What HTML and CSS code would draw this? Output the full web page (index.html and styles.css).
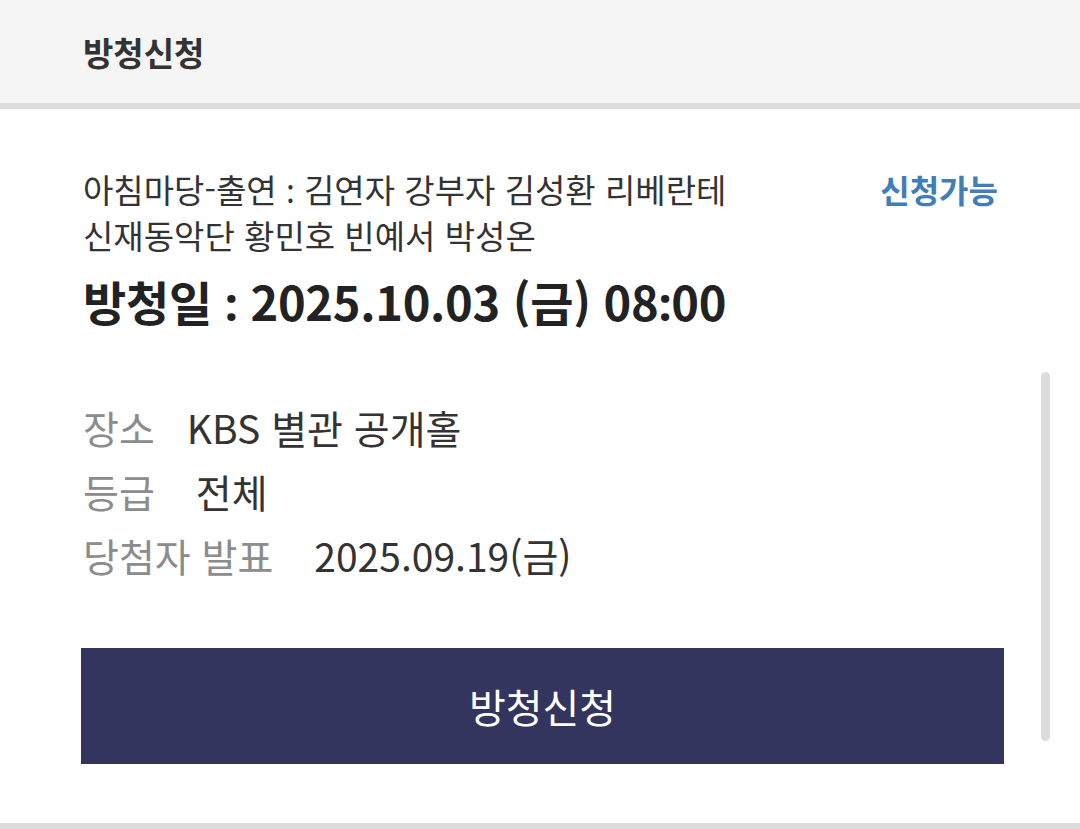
FILE: index.html
```html
<!DOCTYPE html>
<html lang="ko">
<head>
<meta charset="utf-8">
<link rel="stylesheet" href="styles.css">
</head>
<body>
<header class="topbar">
  <h1 class="title">방청신청</h1>
</header>
<main class="content">
  <section class="program">
    <div class="program-head">
      <p class="program-name">아침마당-출연 <span class="colon">:</span> 김연자 강부자 김성환 리베란테<br>신재동악단 황민호 빈예서 박성온</p>
      <span class="status">신청가능</span>
    </div>
    <p class="date">방청일 <span class="colon">:</span> 2025.10.03 (금) 08<span class="colon">:</span>00</p>
  </section>
  <dl class="info">
    <div class="row"><dt>장소</dt><dd class="v1">KBS 별관 공개홀</dd></div>
    <div class="row"><dt>등급</dt><dd class="v2">전체</dd></div>
    <div class="row"><dt>당첨자 발표</dt><dd class="v2">2025.09.19(금)</dd></div>
  </dl>
  <button class="apply">방청신청</button>
  <div class="scrollbar"></div>
</main>
<div class="bottom-line"></div>
</body>
</html>
```
FILE: styles.css
```css
html, body {
  margin: 0;
  padding: 0;
  background: #ffffff;
}
body {
  width: 1080px;
  height: 829px;
  overflow: hidden;
  font-family: "Noto Sans CJK KR", "Noto Sans", sans-serif;
  color: #333333;
  display: flex;
  flex-direction: column;
}
.topbar {
  height: 103px;
  background: #f5f5f5;
  border-bottom: 6px solid #dcdcdc;
  display: flex;
  align-items: center;
  padding-left: 83px;
  flex-shrink: 0;
}
.title {
  margin: 0;
  font-size: 33px;
  font-weight: 700;
  color: #333333;
}
.content {
  position: relative;
  flex: 1;
  padding: 58px 82px 0 83px;
}
.program-head {
  display: flex;
  justify-content: space-between;
  align-items: flex-start;
}
.program-name {
  margin: 0;
  font-size: 33px;
  line-height: 45px;
  color: #333333;
}
.colon {
  font-family: "Noto Sans", sans-serif;
}
.status {
  font-size: 32px;
  font-weight: 700;
  color: #3f7eb8;
  line-height: 45px;
}
.date {
  margin: 12px 0 0;
  font-size: 47px;
  font-weight: 700;
  line-height: 62px;
  color: #222222;
  letter-spacing: -0.3px;
}
.info {
  margin: 61px 0 0;
}
.row {
  display: flex;
  height: 64px;
  align-items: center;
  font-size: 39px;
}
.row dt {
  color: #8c8c8c;
}
.row dd {
  margin: 0;
  color: #333333;
}
.v1 { margin-left: 32px !important; }
.v2 { margin-left: 41px !important; }
.apply {
  display: block;
  margin-top: 61px;
  width: 923px;
  height: 116px;
  background: #34355e;
  border: none;
  color: #ffffff;
  font-family: inherit;
  font-size: 40px;
  margin-left: -2px;
}
.scrollbar {
  position: absolute;
  left: 1041px;
  top: 263px;
  width: 9px;
  height: 369px;
  border-radius: 5px;
  background: #dcdcdf;
}
.bottom-line {
  height: 6px;
  background: #dcdcdc;
  flex-shrink: 0;
}
```
